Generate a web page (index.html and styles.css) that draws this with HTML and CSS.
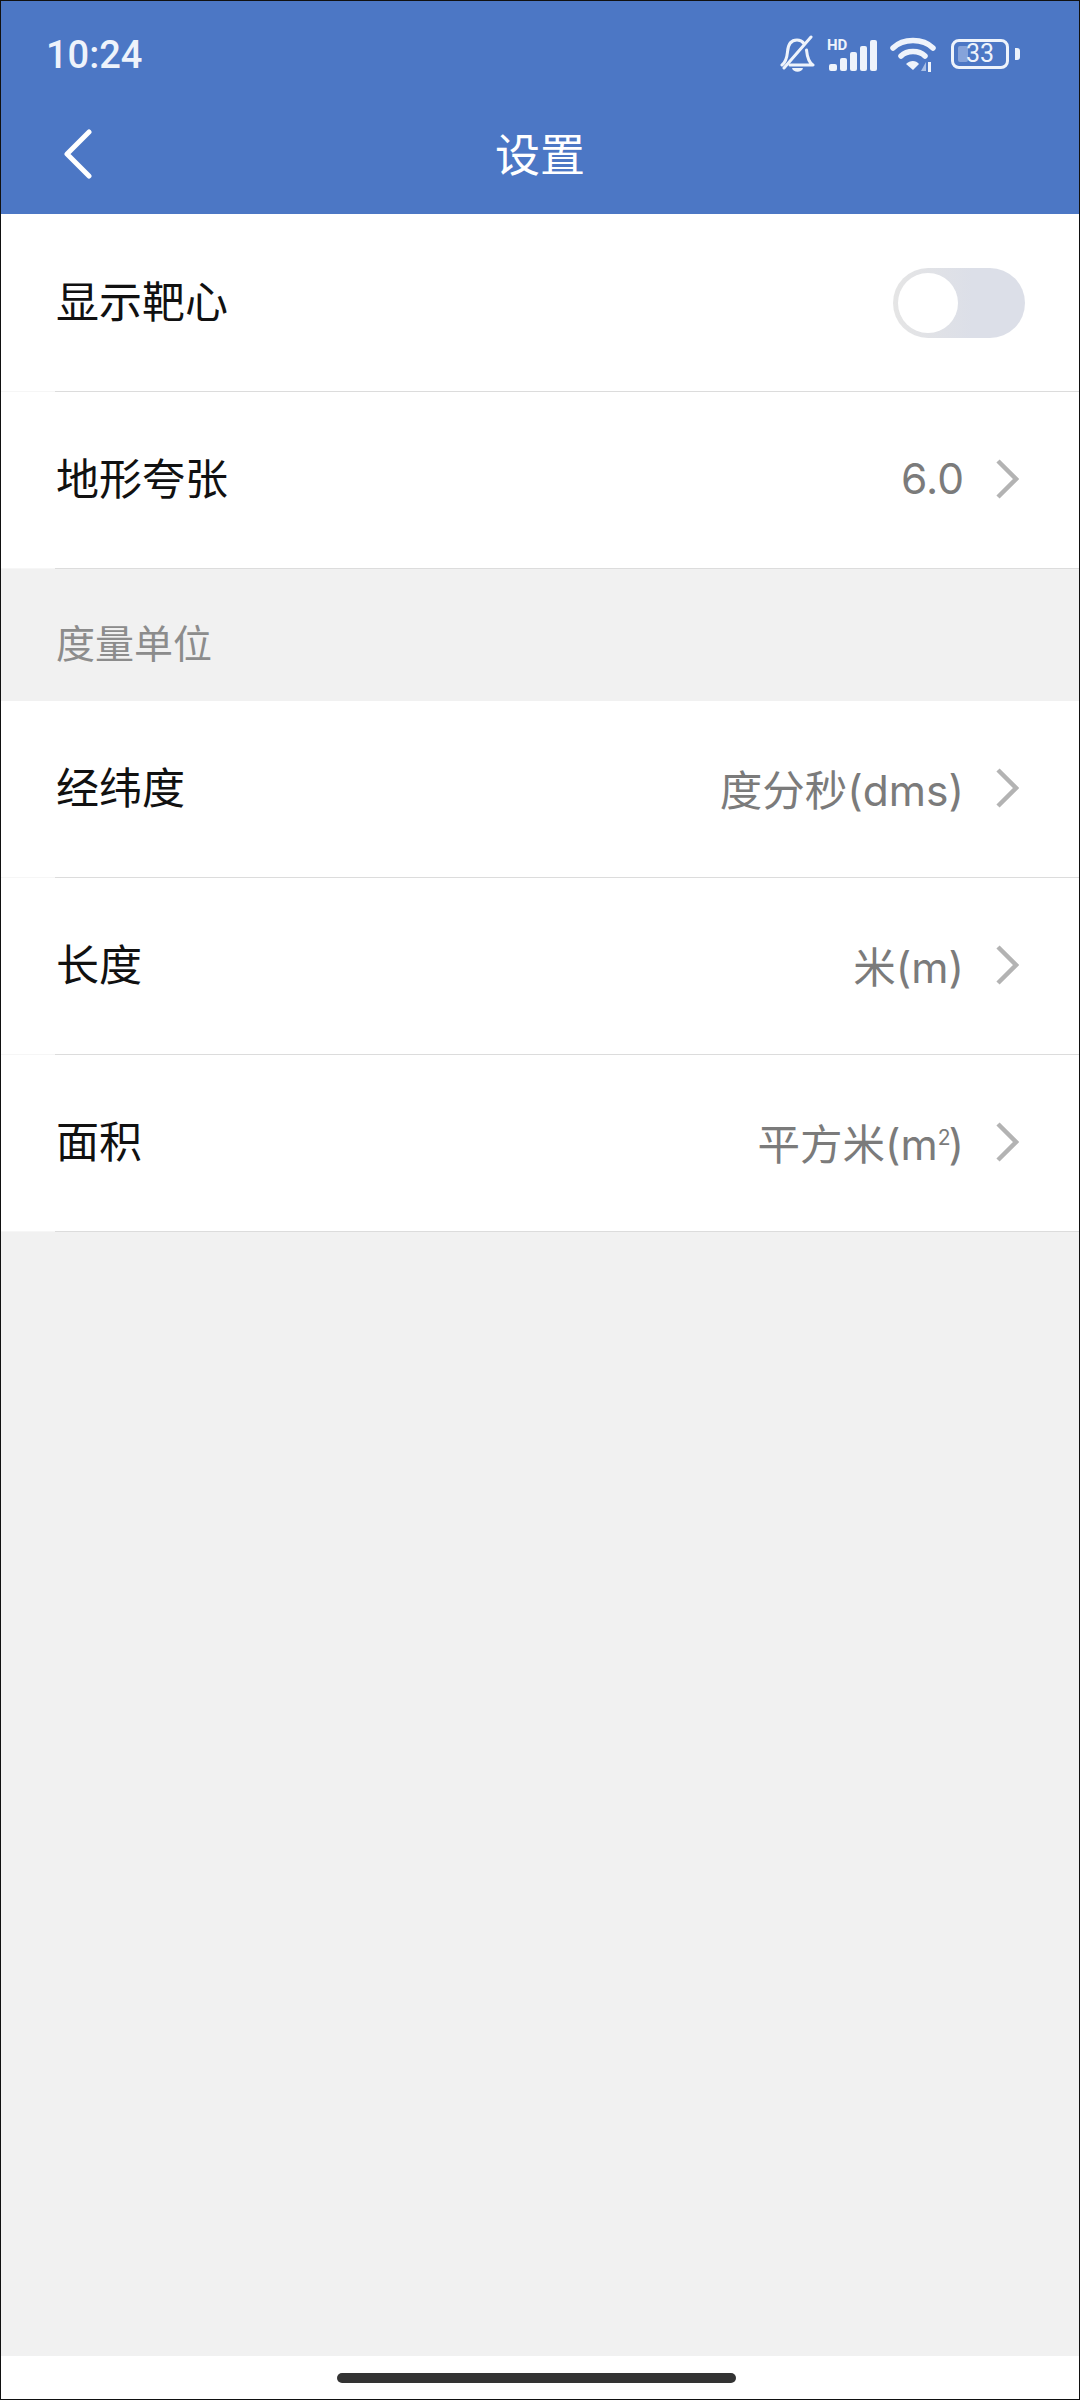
FILE: index.html
```html
<!DOCTYPE html>
<html>
<head>
    <title>设置</title>
    <link rel="stylesheet" href="styles.css">
</head>
<body>
<div class="screen">
    <div class="header">
        <div class="status-bar">
            <span class="time">10:24</span>
            <div class="status-icons">
                <svg class="icon-bell" width="36" height="38" viewBox="0 0 36 38">
                    <path d="M2 30 C6 27 7 22 7.500 17 C8 9 11 5 17 5 C20 5 22.500 6.500 24 8.500 M26.500 15 C27 20 28 27 33 30 L10 30" fill="none" stroke="#eef3fb" stroke-width="3" stroke-linejoin="round" stroke-linecap="round"/>
                    <path d="M4 33 L31 2" stroke="#eef3fb" stroke-width="3" stroke-linecap="round"/>
                    <path d="M12 33 H23 C22 38 13 38 12 33 Z" fill="#eef3fb"/>
                </svg>
                <svg class="icon-signal" width="50" height="36" viewBox="0 0 50 36">
                    <text x="0" y="15" class="hd-text">HD</text>
                    <rect x="2" y="29" width="8" height="7" rx="2" fill="#eef3fb"/>
                    <rect x="13" y="23" width="7" height="13" rx="2" fill="#eef3fb"/>
                    <rect x="23" y="17" width="7" height="19" rx="2" fill="#eef3fb"/>
                    <rect x="33" y="11" width="7" height="25" rx="2" fill="#eef3fb"/>
                    <rect x="43" y="5" width="7" height="31" rx="2" fill="#eef3fb"/>
                </svg>
                <svg class="icon-wifi" width="46" height="36" viewBox="0 0 46 36">
                    <path d="M3 12 C13 2 33 2 43 12" fill="none" stroke="#eef3fb" stroke-width="5.500" stroke-linecap="round"/>
                    <path d="M11 20 C17 14 29 14 35 20" fill="none" stroke="#eef3fb" stroke-width="5.500" stroke-linecap="round"/>
                    <path d="M16 28 L23 34 L29 28 C26 24 20 24 16 28 Z" fill="#eef3fb"/>
                    <path d="M36 26 L36 35 L31 35 Z" fill="#a9bfe6"/>
                    <rect x="38" y="26" width="3" height="10" fill="#eef3fb"/>
                </svg>
                <div class="battery">
                    <div class="battery-body">
                        <div class="battery-fill"></div>
                        <span class="battery-num">33</span>
                    </div>
                    <div class="battery-cap"></div>
                </div>
            </div>
        </div>
        <div class="nav-bar">
            <svg class="back" width="32" height="50" viewBox="0 0 32 50">
                <path d="M27 3 L5 25 L27 47" fill="none" stroke="#fff" stroke-width="5" stroke-linecap="round" stroke-linejoin="round"/>
            </svg>
            <div class="nav-title">设置</div>
        </div>
    </div>

    <div class="group first">
        <div class="row">
            <span class="label">显示靶心</span>
            <div class="switch"><div class="knob"></div></div>
        </div>
        <div class="row">
            <span class="label">地形夸张</span>
            <span class="value">6.0</span>
            <svg class="arrow" width="24" height="40" viewBox="0 0 24 40"><path d="M3 2 L21 20 L3 38" fill="none" stroke="#b3b3b3" stroke-width="4.500"/></svg>
        </div>
    </div>

    <div class="section-title">度量单位</div>

    <div class="group">
        <div class="row">
            <span class="label">经纬度</span>
            <span class="value">度分秒(dms)</span>
            <svg class="arrow" width="24" height="40" viewBox="0 0 24 40"><path d="M3 2 L21 20 L3 38" fill="none" stroke="#b3b3b3" stroke-width="4.500"/></svg>
        </div>
        <div class="row">
            <span class="label">长度</span>
            <span class="value">米(m)</span>
            <svg class="arrow" width="24" height="40" viewBox="0 0 24 40"><path d="M3 2 L21 20 L3 38" fill="none" stroke="#b3b3b3" stroke-width="4.500"/></svg>
        </div>
        <div class="row">
            <span class="label">面积</span>
            <span class="value">平方米(m<sup>2</sup>)</span>
            <svg class="arrow" width="24" height="40" viewBox="0 0 24 40"><path d="M3 2 L21 20 L3 38" fill="none" stroke="#b3b3b3" stroke-width="4.500"/></svg>
        </div>
    </div>

    <div class="filler"></div>

    <div class="home-area">
        <div class="home-bar"></div>
    </div>
</div>
</body>
</html>
```

FILE: styles.css
```css
body {
margin: 0;
font-family: "Roboto", "Noto Sans CJK SC", sans-serif;
}
.screen {
box-sizing: border-box;
width: 1080px;
height: 2400px;
border: 1px solid #111;
background-color: #f1f1f1;
display: flex;
flex-direction: column;
}
.header {
height: 213px;
background-color: #4c77c5;
color: #fff;
}
.status-bar {
height: 106px;
display: flex;
align-items: center;
justify-content: space-between;
padding: 0 59px 0 45px;
}
.time {
font-size: 38px;
font-weight: 500;
color: #eef3fb;
margin-top: 2px;
}
.status-icons {
display: flex;
align-items: center;
}
.icon-signal {
margin-left: 11px;
margin-top: -3px;
}
.icon-wifi {
margin-left: 13px;
}
.hd-text {
font-family: "Roboto", sans-serif;
font-size: 15px;
font-weight: 700;
fill: #eef3fb;
}
.battery {
display: flex;
align-items: center;
gap: 6px;
margin-left: 15px;
}
.battery-body {
box-sizing: border-box;
width: 58px;
height: 30px;
border: 3px solid #eef3fb;
border-radius: 8px;
display: flex;
align-items: center;
justify-content: center;
position: relative;
}
.battery-fill {
position: absolute;
left: 4px;
top: 4px;
bottom: 4px;
width: 10px;
background-color: #86a3da;
border-radius: 2px;
}
.battery-num {
position: relative;
font-size: 25px;
line-height: 24px;
color: #eef3fb;
}
.battery-cap {
width: 5px;
height: 12px;
background-color: #eef3fb;
border-radius: 0 3px 3px 0;
}
.nav-bar {
height: 107px;
display: grid;
grid-template-columns: 1fr auto 1fr;
align-items: center;
}
.back {
margin: -13px 0 0 61px;
}
.nav-title {
font-size: 45px;
font-family: "Noto Sans CJK SC", sans-serif;
margin-top: -16px;
}
.group {
background-color: #fff;
}
.first {
padding-top: 1px;
}
.row {
box-sizing: border-box;
height: 177px;
padding: 0 60px 0 55px;
display: flex;
align-items: center;
border-bottom: 1px solid #dcdcdc;
border-image: linear-gradient(to right, #f6f6f6 55px, #dcdcdc 55px) 1;
}
.label {
flex: 1;
font-size: 43px;
color: #111;
font-family: "Noto Sans CJK SC", sans-serif;
margin-top: -9px;
}
.value {
font-family: "Inter", "Noto Sans CJK SC", sans-serif;
font-size: 42.500px;
color: #7b7b7b;
margin: -3px 31px 0 0;
}
.value sup {
font-size: 21px;
line-height: 0;
letter-spacing: -2px;
}
.arrow {
margin-top: -2px;
}
.switch {
box-sizing: border-box;
width: 132px;
height: 70px;
margin-right: -6px;
background: linear-gradient(to right, #e5e5e5, #dcdfe8 60%);
border-radius: 35px;
padding: 5px;
}
.knob {
width: 60px;
height: 60px;
background-color: #fff;
border-radius: 50%;
}
.section-title {
height: 132px;
box-sizing: border-box;
padding: 48px 0 0 55px;
font-size: 39px;
line-height: 48px;
color: #8c8c8c;
font-family: "Noto Sans CJK SC", sans-serif;
}
.filler {
flex: 1;
}
.home-area {
height: 43px;
background-color: #fff;
display: flex;
justify-content: center;
padding: 17px 7px 0 0;
box-sizing: border-box;
}
.home-bar {
width: 399px;
height: 10px;
background-color: #333;
border-radius: 5px;
}
```
